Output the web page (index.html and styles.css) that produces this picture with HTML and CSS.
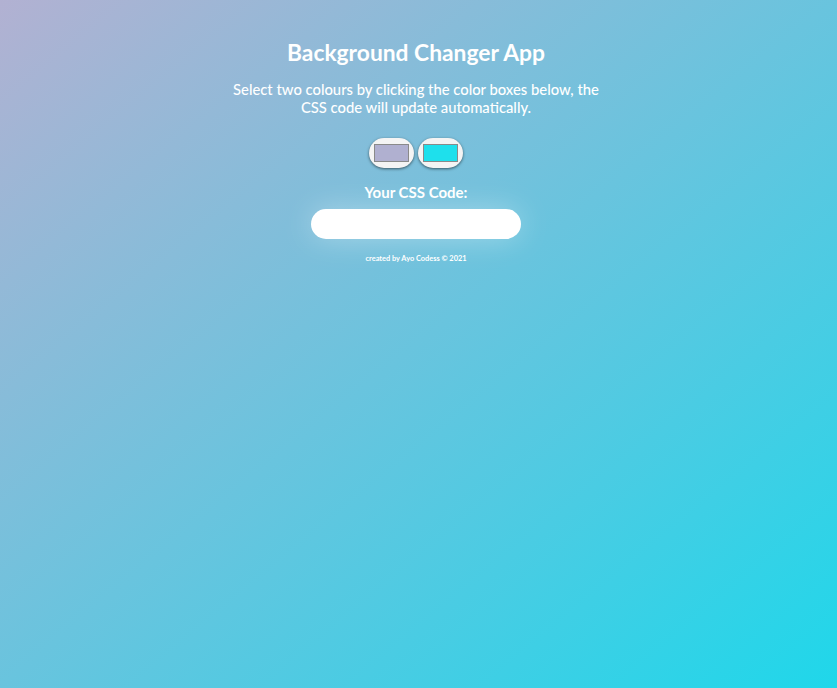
FILE: index.html
```html
<!DOCTYPE html>
<html>
<head>
<meta charset="utf-8">
<link rel="stylesheet" href="styles.css">
</head>
<body>
<main class="app">
  <h1 class="title">Background Changer App</h1>
  <p class="lead">Select two colours by clicking the color boxes below, the CSS code will update automatically.</p>
  <div class="pickers">
    <div class="picker"><span class="swatch swatch-a"></span></div>
    <div class="picker"><span class="swatch swatch-b"></span></div>
  </div>
  <h3 class="label">Your CSS Code:</h3>
  <div class="code"></div>
  <p class="credit">created by Ayo Codess © 2021</p>
</main>
</body>
</html>
```
FILE: styles.css
```css
html, body {
  margin: 0;
  height: 100%;
}
body {
  background: linear-gradient(to bottom right, #b2b1d2, #1fd7ea);
  font-family: Lato, "Noto Sans", sans-serif;
  color: #fff;
}
.app {
  display: flex;
  flex-direction: column;
  align-items: center;
  padding-top: 38px;
  padding-right: 5px;
}
.title {
  margin: 0;
  font-size: 22.8px;
  font-weight: 700;
  line-height: 28px;
}
.lead {
  margin: 14px 0 0;
  width: 378px;
  text-align: center;
  font-size: 14.8px;
  line-height: 18px;
  font-weight: 500;
}
.pickers {
  display: flex;
  gap: 4px;
  margin-top: 22px;
}
.picker {
  width: 45px;
  height: 30px;
  box-sizing: border-box;
  border-radius: 15px;
  background: #f4f4f4;
  box-shadow: 0 1px 3px rgba(0,0,0,0.55);
  display: flex;
  align-items: center;
  justify-content: center;
}
.swatch {
  width: 35px;
  height: 18px;
  box-sizing: border-box;
  border: 1px solid #8a8a8a;
}
.swatch-a { background: #b0b0d0; }
.swatch-b { background: #1ee0ec; }
.label {
  margin: 15px 0 0;
  font-size: 15px;
  font-weight: 700;
  line-height: 18px;
}
.code {
  margin-top: 8px;
  width: 210px;
  height: 30px;
  border-radius: 15px;
  background: #fff;
  box-shadow: 0 0 30px rgba(255,255,255,0.35);
}
.credit {
  margin: 15px 0 0;
  font-size: 7.4px;
  font-weight: 700;
  line-height: 10px;
}
```
